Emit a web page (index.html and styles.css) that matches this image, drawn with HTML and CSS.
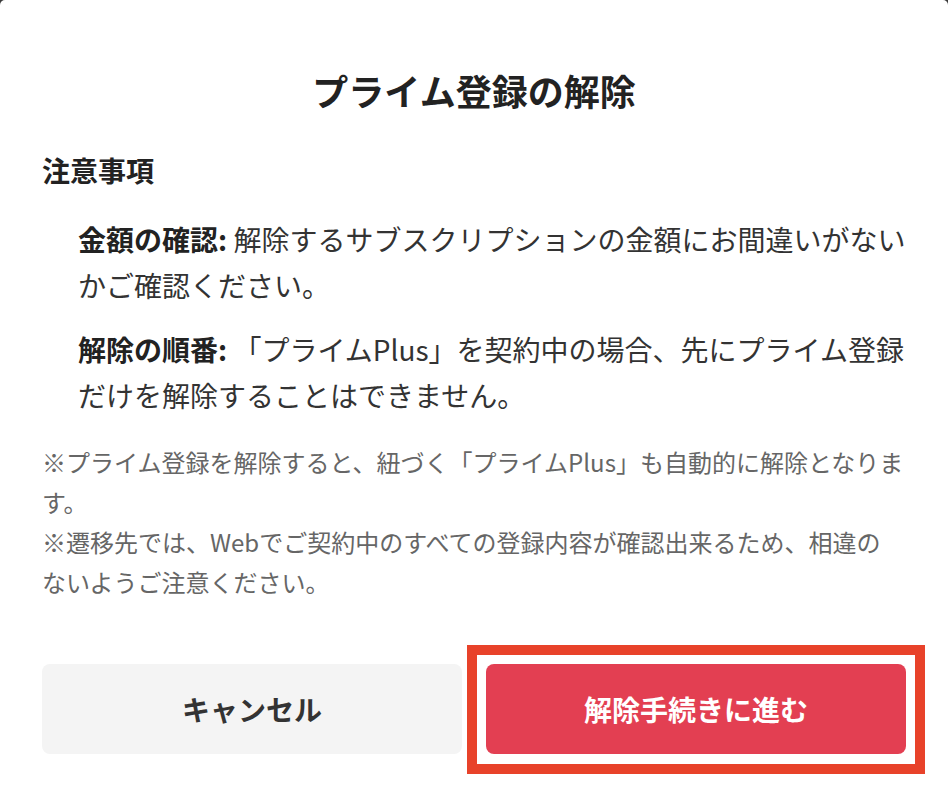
FILE: index.html
```html
<!DOCTYPE html>
<html lang="ja">

<head>
	<meta charset="utf-8">
	<title>プライム登録の解除</title>
	<link rel="stylesheet" href="styles.css">
</head>

<body>
	<div class="modal">
		<h1 class="modal-title">プライム登録の解除</h1>

		<h2 class="notes-title">注意事項</h2>
		<ul class="notes">
			<li><b>金額の確認:</b> 解除するサブスクリプションの金額にお間違いがないかご確認ください。</li>
			<li><b>解除の順番:</b> 「プライムPlus」を契約中の場合、先にプライム登録だけを解除することはできません。</li>
		</ul>

		<p class="remark">※プライム登録を解除すると、紐づく「プライムPlus」も自動的に解除となります。</p>
		<p class="remark">※遷移先では、Webでご契約中のすべての登録内容が確認出来るため、相違の<br>ないようご注意ください。</p>

		<div class="actions">
			<button type="button" class="button button-cancel">キャンセル</button>
			<div class="highlight">
				<button type="button" class="button button-primary">解除手続きに進む</button>
			</div>
		</div>
	</div>
</body>

</html>
```

FILE: styles.css
```css
body {
	margin: 0;
	background-color: #3a3a3a;
	font-family: "Noto Sans CJK JP", "Noto Sans", sans-serif;
	color: #333333;
}

.modal {
	min-height: 796px;
	box-sizing: border-box;
	padding: 63px 42px 0;
	background-color: #ffffff;
	border-radius: 5px 5px 0 0;
}

.modal-title {
	margin: 0;
	font-size: 36px;
	line-height: 54px;
	font-weight: 700;
	text-align: center;
	color: #222222;
}

.notes-title {
	margin: 33px 0 0;
	font-size: 28px;
	line-height: 40px;
	font-weight: 700;
	color: #222222;
}

.notes {
	margin: 26px 0 0;
	padding: 0 0 0 36px;
	list-style: none;
	font-size: 28px;
	line-height: 46px;
}

.notes li + li {
	margin-top: 18px;
}

.notes b {
	color: #222222;
}

.remark {
	margin: 0;
	font-size: 24px;
	line-height: 40px;
	color: #666666;
}

.notes + .remark {
	margin-top: 24px;
}

.actions {
	display: grid;
	grid-template-columns: 1fr 1fr;
	gap: 24px;
	margin-top: 62px;
}

.highlight {
	position: relative;
}

/* annotation frame drawn round the confirm button */
.highlight::after {
	content: "";
	position: absolute;
	top: -19px;
	left: -19px;
	right: -19px;
	bottom: -20px;
	border: 10px solid #e8422a;
	pointer-events: none;
}

.button {
	display: block;
	width: 100%;
	height: 90px;
	border: none;
	border-radius: 8px;
	font-family: inherit;
	font-size: 28px;
	font-weight: 700;
}

.button-cancel {
	background-color: #f4f4f4;
	color: #333333;
}

.button-primary {
	background-color: #e33f52;
	color: #ffffff;
}
```
